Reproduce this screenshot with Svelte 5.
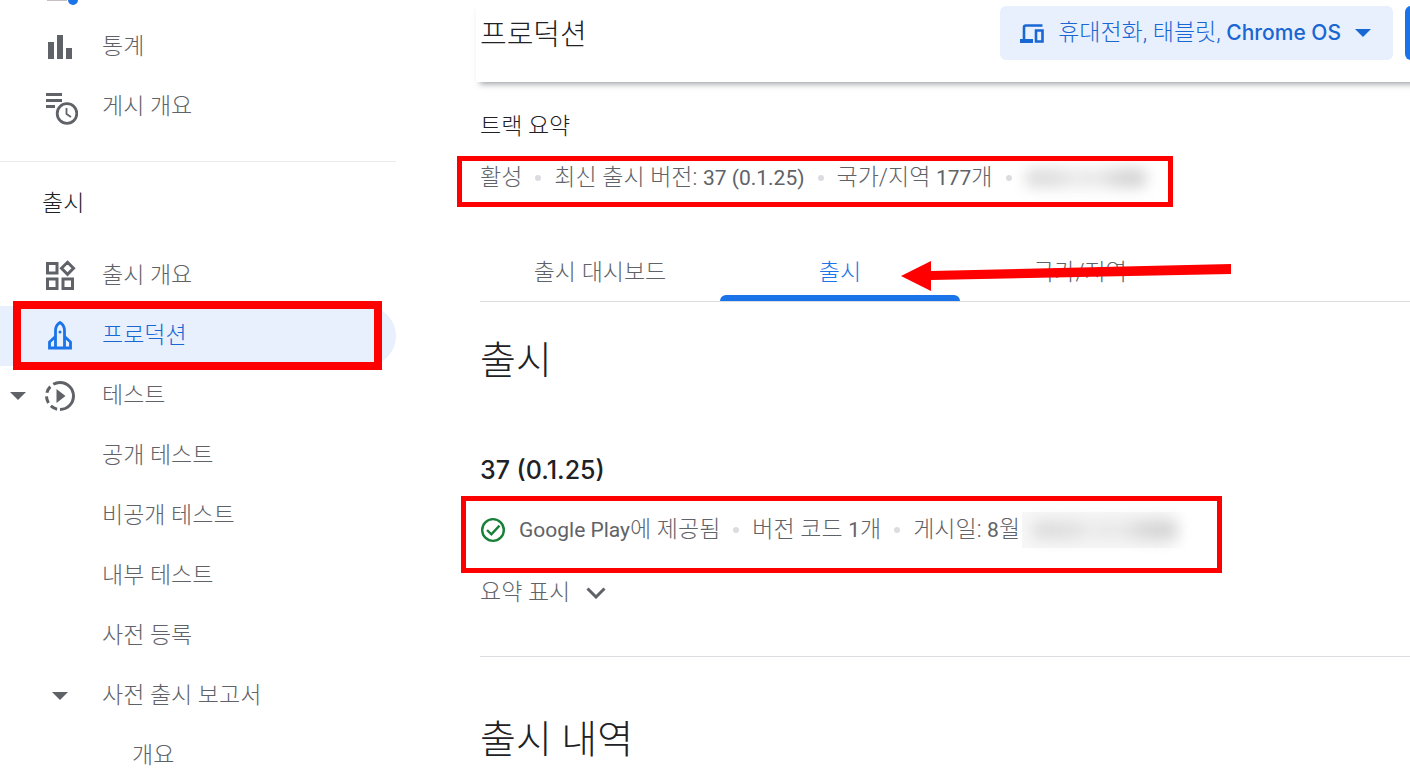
<script>
  let activeTab = "releases";

  const tabs = [
    { id: "dashboard", label: "출시 대시보드" },
    { id: "releases", label: "출시" },
    { id: "countries", label: "국가/지역" }
  ];

  const overview = [
    { label: "통계", icon: "stats" },
    { label: "게시 개요", icon: "publishing" }
  ];

  const release = [
    { label: "출시 개요", icon: "widgets" },
    { label: "프로덕션", icon: "rocket", active: true, marked: true },
    { label: "테스트", icon: "testing", expandable: true },
    { label: "공개 테스트" },
    { label: "비공개 테스트" },
    { label: "내부 테스트" },
    { label: "사전 등록" },
    { label: "사전 출시 보고서", subExpandable: true },
    { label: "개요", nested: true }
  ];
</script>

{#snippet icon(name)}
  <svg class="icon" viewBox="0 0 36 36" aria-hidden="true">
    {#if name === "inbox"}
      <path d="M6 4h18v27H6z" fill="none" stroke="#c9bfc3" stroke-width="2" />
      <circle cx="31" cy="31" r="5" fill="#1a73e8" />
    {:else if name === "stats"}
      <path d="M6 13h6v17H6zM15 6h6v24h-6zM24 19h6v11h-6z" />
    {:else if name === "publishing"}
      <path d="M4 4h16v3H4zM4 10h16v3H4zM4 16h9v3H4z" />
      <circle cx="25" cy="24.500" r="9.800" fill="none" stroke="currentColor" stroke-width="2.800" />
      <path d="M24.500 19v6l4.500 3" fill="none" stroke="currentColor" stroke-width="1.800" />
    {:else if name === "widgets"}
      <path
        d="M5.500 5.500h9.500v9.500H5.500zM5.500 21h9.500v9.500H5.500zM21 21h9.500v9.500H21zM25.500 4.300l6 6-6 6-6-6z"
        fill="none" stroke="currentColor" stroke-width="3" />
    {:else if name === "rocket"}
      <path
        d="M13.500 30V13q0-6 4.500-8.500Q22.500 7 22.500 13v17M13.500 18.500L7.500 24v6h21v-6l-6-5.500"
        fill="none" stroke="currentColor" stroke-width="2.800" />
      <circle cx="18" cy="14" r="1.500" />
    {:else if name === "testing"}
      <path d="M18 4.500a13.500 13.500 0 0 1 0 27" fill="none" stroke="currentColor" stroke-width="3" />
      <path
        d="M18 31.500a13.500 13.500 0 0 1 0-27" fill="none" stroke="currentColor"
        stroke-width="3" stroke-dasharray="7 3.700" stroke-dashoffset="-3" />
      <path d="M14.500 11v14l9-7z" />
    {/if}
  </svg>
{/snippet}

{#snippet caret()}
  <svg class="caret" viewBox="0 0 16 8" aria-hidden="true"><path d="M0 0h16L8 8z" /></svg>
{/snippet}

{#snippet row(item)}
  <li>
    <a href="#{item.icon || 'item'}" class:active={item.active} class:nested={item.nested}>
      <span class="expander">{#if item.expandable}{@render caret()}{/if}</span>
      <span class="slot">
        {#if item.icon}{@render icon(item.icon)}{/if}
        {#if item.subExpandable}{@render caret()}{/if}
      </span>
      <span>{item.label}</span>
      {#if item.marked}<i class="mark"></i>{/if}
    </a>
  </li>
{/snippet}

<div class="page">
  <nav>
    <div class="inbox">
      <span class="expander"></span>
      <span class="slot">{@render icon("inbox")}</span>
    </div>
    <ul>
      {#each overview as item}{@render row(item)}{/each}
    </ul>
    <hr />
    <h2>출시</h2>
    <ul>
      {#each release as item}{@render row(item)}{/each}
    </ul>
  </nav>

  <div class="content">
    <header>
      <h1>프로덕션</h1>
      <button class="devices">
        <svg class="device-icon" viewBox="0 0 24 19" aria-hidden="true">
          <path d="M4 16V3.500Q4 1.500 6 1.500H22.500" fill="none" stroke="currentColor" stroke-width="2.600" />
          <path d="M0 15h13v4H0z" />
          <path d="M16 6.500h6.500v11H16z" fill="none" stroke="currentColor" stroke-width="2.600" />
        </svg>
        <span>휴대전화, 태블릿, <b>Chrome OS</b></span>
        {@render caret()}
      </button>
      <button class="create" aria-label="새 버전 만들기"></button>
    </header>

    <main>
      <h3 class="track">트랙 요약</h3>
      <div class="facts summary">
        <span class="fact">활성</span>
        <span class="fact"><span>최신 출시 버전: <b>37 (0.1.25)</b></span></span>
        <span class="fact"><span>국가/지역 <b>177</b>개</span></span>
        <span class="fact smudge"></span>
        <i class="mark"></i>
      </div>

      <div class="tabs" role="tablist">
        {#each tabs as tab}
          <button
            role="tab"
            aria-selected={activeTab === tab.id}
            class:selected={activeTab === tab.id}
            on:click={() => (activeTab = tab.id)}>
            {tab.label}
          </button>
        {/each}
        <svg class="arrow" viewBox="0 0 330 30" aria-hidden="true">
          <path d="M0 15L30 0v10L330 3v10L30 19v11z" />
        </svg>
      </div>

      <h2>출시</h2>

      <section>
        <h3 class="version">37 (0.1.25)</h3>
        <div class="facts status">
          <span class="fact available">
            <svg class="check" viewBox="0 0 24 24" aria-hidden="true">
              <circle cx="12" cy="12" r="10" />
              <path d="M6.500 12l4 4 7.500-8" />
            </svg>
            <span><b>Google Play</b>에 제공됨</span>
          </span>
          <span class="fact"><span>버전 코드 <b>1</b>개</span></span>
          <span class="fact"><span>게시일: <b>8</b>월</span><i class="smudge wide"></i></span>
          <i class="mark"></i>
        </div>
        <button class="toggle">
          요약 표시
          <svg class="chevron" viewBox="0 0 20 12" aria-hidden="true"><path d="M1.500 1.500L10 10l8.500-8.500" /></svg>
        </button>
      </section>

      <h2 class="history">출시 내역</h2>
    </main>
  </div>
</div>

<style>
  :global(body) {
    overflow: hidden;
  }
  .page {
    --cl-text: #202124;
    --cl-grey: #5f6368;
    --cl-blue: #1a73e8;
    --cl-link: #1967d2;
    --cl-selected: #e8f0fe;
    --cl-line: #dadce0;
    --cl-mark: #ff0000;

    display: flex;
    gap: 84px;
    height: 100vh;
    overflow: hidden;
    background-color: white;
    color: var(--cl-grey);
    font-family: Roboto, "Noto Sans CJK KR", sans-serif;
    font-size: 23px;
    font-weight: 300;
    line-height: 30px;
  }
  h1,
  h2,
  h3,
  ul {
    margin: 0;
    padding: 0;
    font-weight: 300;
    color: var(--cl-text);
  }
  button {
    border: none;
    padding: 0;
    background: none;
    color: inherit;
    font: inherit;
    cursor: pointer;
  }
  svg {
    display: block;
    fill: currentColor;
    flex: none;
  }
  .caret {
    width: 16px;
    height: 8px;
  }
  .mark {
    position: absolute;
    border: 5px solid var(--cl-mark);
    pointer-events: none;
  }

  nav {
    flex: none;
    width: 396px;
    margin-top: -43px;
  }
  nav ul {
    list-style: none;
  }
  nav a,
  .inbox {
    position: relative;
    display: flex;
    align-items: center;
    height: 60px;
    border-radius: 0 30px 30px 0;
    color: var(--cl-grey);
    text-decoration: none;
  }
  nav a.active {
    background-color: var(--cl-selected);
    color: var(--cl-link);
  }
  nav a.active .slot {
    color: var(--cl-blue);
  }
  nav .mark {
    inset: -5px 14px -4px 13px;
    border-width: 8px;
  }
  nav .nested {
    padding-left: 30px;
  }
  .expander,
  .slot {
    box-sizing: border-box;
    flex: none;
  }
  .expander {
    width: 42px;
    padding-left: 10px;
  }
  .slot {
    display: grid;
    place-items: center;
    width: 36px;
    margin-right: 24px;
  }
  .icon {
    width: 36px;
    height: 36px;
  }
  hr {
    margin: 24px 0 0;
    border: none;
    border-top: 1px solid #e8eaed;
  }
  nav h2 {
    padding: 27px 42px;
    font-size: 23px;
    line-height: 30px;
  }

  .content {
    flex: 1;
    min-width: 0;
  }
  header {
    display: flex;
    align-items: flex-start;
    gap: 12px;
    box-sizing: border-box;
    height: 82px;
    margin: 0 -115px 0 -4px;
    padding: 6px 0 0 4px;
    box-shadow: 0 6px 6px -4px rgba(60, 64, 67, 0.5);
  }
  h1 {
    flex: 1;
    font-size: 29px;
    line-height: 58px;
  }
  .devices {
    display: flex;
    align-items: center;
    gap: 14px;
    height: 54px;
    padding: 0 22px 0 20px;
    border-radius: 6px;
    background-color: var(--cl-selected);
    color: var(--cl-link);
    white-space: nowrap;
  }
  .devices b {
    font-family: Inter, sans-serif;
    font-size: 21px;
    font-weight: 500;
  }
  .device-icon {
    width: 24px;
    height: 19px;
  }
  .create {
    width: 120px;
    height: 54px;
    border-radius: 6px;
    background-color: var(--cl-blue);
  }

  .track {
    padding-top: 30px;
    font-size: 23px;
  }
  .facts {
    position: relative;
    display: flex;
    align-items: center;
    width: max-content;
    height: 30px;
  }
  .facts b {
    font-size: 21px;
    font-weight: 400;
  }
  .summary {
    margin-top: 21px;
  }
  .fact {
    display: flex;
    align-items: center;
  }
  .fact + .fact::before {
    content: "";
    width: 6px;
    height: 6px;
    margin: 0 13px;
    border-radius: 50%;
    background-color: var(--cl-line);
  }
  .smudge::after {
    content: "";
    width: 122px;
    height: 20px;
    border-radius: 8px;
    background: linear-gradient(90deg, #dedede 15%, #e2e2e2 30%, #eeeeee 42%, #e6e6e6 50%, #ececec 58%, #d6d6d6 80%);
    filter: blur(7px);
  }
  .smudge.wide {
    display: flex;
    align-items: center;
    justify-content: center;
    width: 165px;
    height: 36px;
    margin-left: 2px;
    background: linear-gradient(90deg, #f7f7f7 85%, white);
  }
  .smudge.wide::after {
    width: 146px;
  }
  .summary .mark {
    inset: -7px -26px -14px -23px;
  }
  .status {
    margin-top: 29px;
  }
  .status .mark {
    inset: -19px -35px -28px -19px;
  }

  .tabs {
    position: relative;
    display: flex;
    height: 60px;
    margin-top: 48px;
    border-bottom: 1px solid var(--cl-line);
  }
  .tabs button {
    position: relative;
    width: 240px;
    padding-top: 3px;
  }
  .tabs .selected {
    color: var(--cl-blue);
  }
  .tabs .selected::after {
    content: "";
    position: absolute;
    inset: auto 0 0;
    height: 6px;
    border-radius: 6px 6px 0 0;
    background-color: var(--cl-blue);
  }
  .arrow {
    position: absolute;
    top: 20px;
    left: 421px;
    width: 330px;
    height: 30px;
    fill: var(--cl-mark);
    pointer-events: none;
  }

  main h2 {
    padding-top: 35px;
    font-size: 39px;
    line-height: 48px;
  }
  section {
    padding: 69px 0 48px;
    border-bottom: 1px solid var(--cl-line);
  }
  .version {
    font-family: Inter, sans-serif;
    font-size: 25px;
    font-weight: 500;
    line-height: 32px;
  }
  .available {
    gap: 13px;
  }
  .check {
    width: 26px;
    height: 26px;
    fill: none;
    stroke: #188038;
    stroke-width: 2.2;
  }
  .toggle {
    display: flex;
    align-items: center;
    gap: 16px;
    margin-top: 33px;
  }
  .chevron {
    width: 20px;
    height: 12px;
    fill: none;
    stroke: currentColor;
    stroke-width: 3;
  }
  main .history {
    padding-top: 59px;
  }
</style>
